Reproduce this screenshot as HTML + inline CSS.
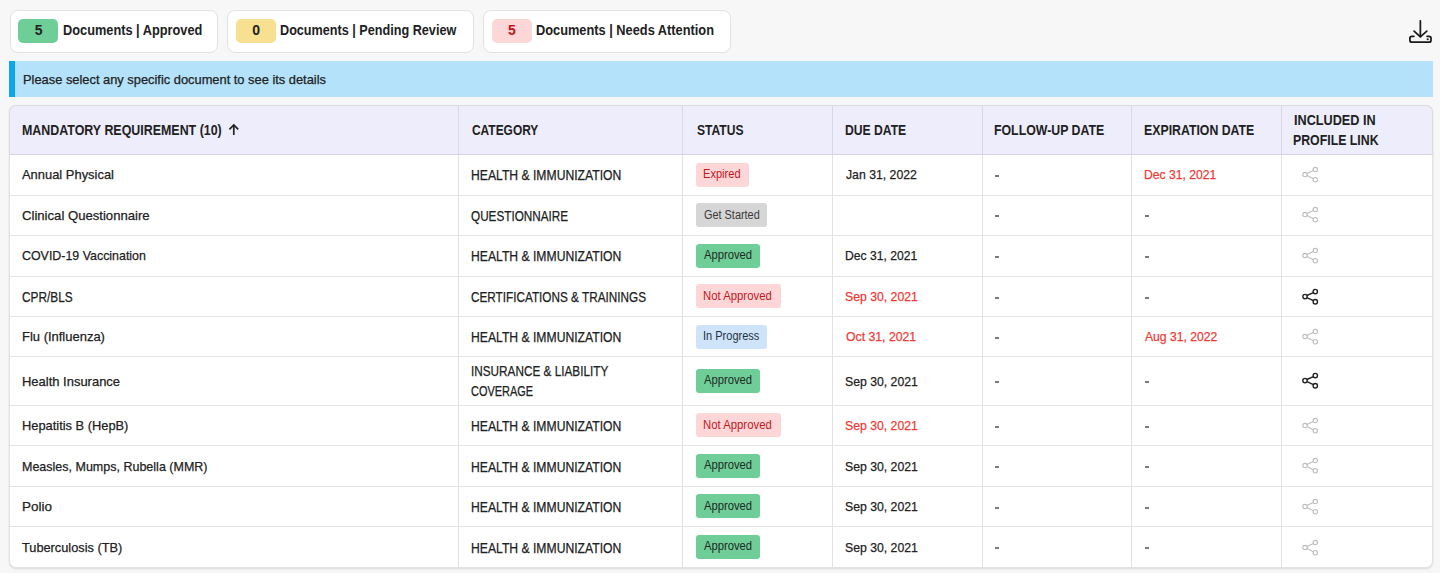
<!DOCTYPE html><html><head><meta charset="utf-8"><style>
*{margin:0;padding:0;box-sizing:border-box}
html,body{width:1440px;height:573px;overflow:hidden;background:#f7f7f7;font-family:"Liberation Sans",sans-serif}
.t{position:absolute;white-space:nowrap;line-height:20px;transform-origin:0 0}
.r{-webkit-text-stroke:0.25px currentColor}
.card{position:absolute;top:10px;height:43px;background:#fff;border:1px solid #e2e2e2;border-radius:8px}
.cb{position:absolute;top:19.4px;width:40.2px;height:24.1px;border-radius:5px}
.cbt{position:absolute;top:17.8px;width:40.2px;height:24.1px;line-height:24px;text-align:center;font-size:14px;font-weight:700}
.ic{position:absolute}
.info{position:absolute;left:9px;top:61px;width:1423.5px;height:35.5px;background:#b3e2fa;border-left:6px solid #0ea5ef}
.tbl{position:absolute;left:9.3px;top:104.6px;width:1423.7px;height:463.1px;background:#fff;border:1px solid #e2e2e2;border-radius:7px;box-shadow:0 1px 2px rgba(0,0,0,.12)}
.thead{position:absolute;left:9.3px;top:104.6px;width:1423.7px;height:50.3px;background:#eeedfc;border:1px solid #dcdcdf;border-bottom:1px solid #d6d3e6;border-radius:7px 7px 0 0}
.hl{position:absolute;left:10.3px;width:1421.7px;height:1px;background:#e4e4e4}
.vlh{position:absolute;top:105.6px;height:48.8px;width:1px;background:#d9d6ea}
.vl{position:absolute;top:155px;height:411.5px;width:1px;background:#e2e2e2}
.sb{position:absolute;height:24px;border-radius:3px}
.dash{position:absolute;width:4px;height:2px;background:#7a7a7a}
</style></head><body>
<div class="card" style="left:9.6px;width:208.7px"></div>
<div class="card" style="left:227.2px;width:246.5px"></div>
<div class="card" style="left:482.6px;width:248.2px"></div>
<div class="cb" style="left:18.3px;background:#6fce97"></div>
<div class="cb" style="left:236px;background:#f7e08f"></div>
<div class="cb" style="left:491.8px;background:#fdd6d8"></div>
<div class="cbt" style="left:18.5px;color:#212121">5</div>
<div class="cbt" style="left:236px;color:#212121">0</div>
<div class="cbt" style="left:491.8px;color:#c2161c">5</div>
<svg class="ic" style="left:1405px;top:15px" width="32" height="32" viewBox="0 0 32 32"><g fill="none" stroke="#1a1a1a" stroke-width="1.75" stroke-linecap="round" stroke-linejoin="round"><line x1="15.37" y1="5.8" x2="15.37" y2="21.4"/><polyline points="9.1,16.2 15.37,21.9 21.8,16.2"/><path d="M8.9 21.3 H6.9 A2 2 0 0 0 4.9 23.3 V25.2 A2 2 0 0 0 6.9 27.2 H24 A2 2 0 0 0 26 25.2 V23.3 A2 2 0 0 0 24 21.3 H22.0"/></g><circle cx="22.7" cy="24.2" r="1.05" fill="#1a1a1a"/></svg>
<div class="info"></div>
<div class="tbl"></div><div class="thead"></div>
<div class="hl" style="top:194.50px"></div>
<div class="hl" style="top:235.00px"></div>
<div class="hl" style="top:275.50px"></div>
<div class="hl" style="top:316.00px"></div>
<div class="hl" style="top:356.10px"></div>
<div class="hl" style="top:404.50px"></div>
<div class="hl" style="top:445.00px"></div>
<div class="hl" style="top:485.50px"></div>
<div class="hl" style="top:526.00px"></div>
<div class="vlh" style="left:458.10px"></div><div class="vl" style="left:458.10px"></div>
<div class="vlh" style="left:682.30px"></div><div class="vl" style="left:682.30px"></div>
<div class="vlh" style="left:832.00px"></div><div class="vl" style="left:832.00px"></div>
<div class="vlh" style="left:982.30px"></div><div class="vl" style="left:982.30px"></div>
<div class="vlh" style="left:1131.10px"></div><div class="vl" style="left:1131.10px"></div>
<div class="vlh" style="left:1280.75px"></div><div class="vl" style="left:1280.75px"></div>
<div class="sb" style="left:695.9px;top:162.75px;width:53.3px;background:#fdd6d8"></div>
<div class="sb" style="left:695.9px;top:203.25px;width:71.3px;background:#d6d6d6"></div>
<div class="sb" style="left:695.9px;top:243.75px;width:64px;background:#6fce97"></div>
<div class="sb" style="left:695.9px;top:284.25px;width:84.75px;background:#fdd6d8"></div>
<div class="sb" style="left:695.9px;top:324.55px;width:71px;background:#cfe4fb"></div>
<div class="sb" style="left:695.9px;top:368.80px;width:64px;background:#6fce97"></div>
<div class="sb" style="left:695.9px;top:413.25px;width:84.75px;background:#fdd6d8"></div>
<div class="sb" style="left:695.9px;top:453.75px;width:64px;background:#6fce97"></div>
<div class="sb" style="left:695.9px;top:494.25px;width:64px;background:#6fce97"></div>
<div class="sb" style="left:695.9px;top:534.75px;width:64px;background:#6fce97"></div>
<div class="dash" style="left:995.0px;top:175px"></div>
<div class="dash" style="left:995.0px;top:215px"></div>
<div class="dash" style="left:1145.0px;top:215px"></div>
<div class="dash" style="left:995.0px;top:256px"></div>
<div class="dash" style="left:1145.0px;top:256px"></div>
<div class="dash" style="left:995.0px;top:297px"></div>
<div class="dash" style="left:1145.0px;top:297px"></div>
<div class="dash" style="left:995.0px;top:337px"></div>
<div class="dash" style="left:995.0px;top:381px"></div>
<div class="dash" style="left:1145.0px;top:381px"></div>
<div class="dash" style="left:995.0px;top:426px"></div>
<div class="dash" style="left:1145.0px;top:426px"></div>
<div class="dash" style="left:995.0px;top:466px"></div>
<div class="dash" style="left:1145.0px;top:466px"></div>
<div class="dash" style="left:995.0px;top:507px"></div>
<div class="dash" style="left:1145.0px;top:507px"></div>
<div class="dash" style="left:995.0px;top:547px"></div>
<div class="dash" style="left:1145.0px;top:547px"></div>
<svg class="ic" style="left:1300px;top:164.75px" width="20" height="20" viewBox="0 0 20 20"><g fill="none" stroke="#bdbdbd" stroke-width="1.1"><circle cx="5" cy="9.55" r="2.2"/><circle cx="15.3" cy="4.55" r="2.2"/><circle cx="15.3" cy="14.75" r="2.2"/><line x1="6.9" y1="8.5" x2="13.4" y2="5.6"/><line x1="6.9" y1="10.6" x2="13.4" y2="13.7"/></g></svg>
<svg class="ic" style="left:1300px;top:205.35px" width="20" height="20" viewBox="0 0 20 20"><g fill="none" stroke="#bdbdbd" stroke-width="1.1"><circle cx="5" cy="9.55" r="2.2"/><circle cx="15.3" cy="4.55" r="2.2"/><circle cx="15.3" cy="14.75" r="2.2"/><line x1="6.9" y1="8.5" x2="13.4" y2="5.6"/><line x1="6.9" y1="10.6" x2="13.4" y2="13.7"/></g></svg>
<svg class="ic" style="left:1300px;top:245.95px" width="20" height="20" viewBox="0 0 20 20"><g fill="none" stroke="#bdbdbd" stroke-width="1.1"><circle cx="5" cy="9.55" r="2.2"/><circle cx="15.3" cy="4.55" r="2.2"/><circle cx="15.3" cy="14.75" r="2.2"/><line x1="6.9" y1="8.5" x2="13.4" y2="5.6"/><line x1="6.9" y1="10.6" x2="13.4" y2="13.7"/></g></svg>
<svg class="ic" style="left:1300px;top:286.55px" width="20" height="20" viewBox="0 0 20 20"><g fill="none" stroke="#222222" stroke-width="1.4"><circle cx="5" cy="9.55" r="2.2"/><circle cx="15.3" cy="4.55" r="2.2"/><circle cx="15.3" cy="14.75" r="2.2"/><line x1="6.9" y1="8.5" x2="13.4" y2="5.6"/><line x1="6.9" y1="10.6" x2="13.4" y2="13.7"/></g></svg>
<svg class="ic" style="left:1300px;top:326.95px" width="20" height="20" viewBox="0 0 20 20"><g fill="none" stroke="#bdbdbd" stroke-width="1.1"><circle cx="5" cy="9.55" r="2.2"/><circle cx="15.3" cy="4.55" r="2.2"/><circle cx="15.3" cy="14.75" r="2.2"/><line x1="6.9" y1="8.5" x2="13.4" y2="5.6"/><line x1="6.9" y1="10.6" x2="13.4" y2="13.7"/></g></svg>
<svg class="ic" style="left:1300px;top:371.30px" width="20" height="20" viewBox="0 0 20 20"><g fill="none" stroke="#222222" stroke-width="1.4"><circle cx="5" cy="9.55" r="2.2"/><circle cx="15.3" cy="4.55" r="2.2"/><circle cx="15.3" cy="14.75" r="2.2"/><line x1="6.9" y1="8.5" x2="13.4" y2="5.6"/><line x1="6.9" y1="10.6" x2="13.4" y2="13.7"/></g></svg>
<svg class="ic" style="left:1300px;top:415.85px" width="20" height="20" viewBox="0 0 20 20"><g fill="none" stroke="#bdbdbd" stroke-width="1.1"><circle cx="5" cy="9.55" r="2.2"/><circle cx="15.3" cy="4.55" r="2.2"/><circle cx="15.3" cy="14.75" r="2.2"/><line x1="6.9" y1="8.5" x2="13.4" y2="5.6"/><line x1="6.9" y1="10.6" x2="13.4" y2="13.7"/></g></svg>
<svg class="ic" style="left:1300px;top:456.45px" width="20" height="20" viewBox="0 0 20 20"><g fill="none" stroke="#bdbdbd" stroke-width="1.1"><circle cx="5" cy="9.55" r="2.2"/><circle cx="15.3" cy="4.55" r="2.2"/><circle cx="15.3" cy="14.75" r="2.2"/><line x1="6.9" y1="8.5" x2="13.4" y2="5.6"/><line x1="6.9" y1="10.6" x2="13.4" y2="13.7"/></g></svg>
<svg class="ic" style="left:1300px;top:497.05px" width="20" height="20" viewBox="0 0 20 20"><g fill="none" stroke="#bdbdbd" stroke-width="1.1"><circle cx="5" cy="9.55" r="2.2"/><circle cx="15.3" cy="4.55" r="2.2"/><circle cx="15.3" cy="14.75" r="2.2"/><line x1="6.9" y1="8.5" x2="13.4" y2="5.6"/><line x1="6.9" y1="10.6" x2="13.4" y2="13.7"/></g></svg>
<svg class="ic" style="left:1300px;top:537.65px" width="20" height="20" viewBox="0 0 20 20"><g fill="none" stroke="#bdbdbd" stroke-width="1.1"><circle cx="5" cy="9.55" r="2.2"/><circle cx="15.3" cy="4.55" r="2.2"/><circle cx="15.3" cy="14.75" r="2.2"/><line x1="6.9" y1="8.5" x2="13.4" y2="5.6"/><line x1="6.9" y1="10.6" x2="13.4" y2="13.7"/></g></svg>
<svg class="ic" style="left:226px;top:122px" width="16" height="16" viewBox="0 0 16 16"><g fill="none" stroke="#222" stroke-width="1.7" stroke-linecap="butt" stroke-linejoin="miter"><line x1="7.8" y1="3.2" x2="7.8" y2="13"/><polyline points="3.4,7.4 7.8,3 12.2,7.4"/></g></svg>
<div class="t" id="t0" style="left:62.59px;top:19.75px;font-size:14px;font-weight:700;color:#212121;transform:scaleX(0.9123)">Documents | Approved</div>
<div class="t" id="t1" style="left:279.59px;top:19.75px;font-size:14px;font-weight:700;color:#212121;transform:scaleX(0.9026)">Documents | Pending Review</div>
<div class="t" id="t2" style="left:535.58px;top:19.75px;font-size:14px;font-weight:700;color:#212121;transform:scaleX(0.9139)">Documents | Needs Attention</div>
<div class="t r" id="t3" style="left:23.41px;top:69.50px;font-size:13px;font-weight:400;color:#212121;transform:scaleX(0.9889)">Please select any specific document to see its details</div>
<div class="t" id="t4" style="left:22.00px;top:119.90px;font-size:14px;font-weight:700;color:#212121;transform:scaleX(0.8876)">MANDATORY REQUIREMENT (10)</div>
<div class="t" id="t5" style="left:471.77px;top:119.90px;font-size:14px;font-weight:700;color:#212121;transform:scaleX(0.8528)">CATEGORY</div>
<div class="t" id="t6" style="left:696.52px;top:119.90px;font-size:14px;font-weight:700;color:#212121;transform:scaleX(0.8622)">STATUS</div>
<div class="t" id="t7" style="left:844.82px;top:119.90px;font-size:14px;font-weight:700;color:#212121;transform:scaleX(0.8678)">DUE DATE</div>
<div class="t" id="t8" style="left:994.40px;top:119.90px;font-size:14px;font-weight:700;color:#212121;transform:scaleX(0.8806)">FOLLOW-UP DATE</div>
<div class="t" id="t9" style="left:1144.01px;top:119.90px;font-size:14px;font-weight:700;color:#212121;transform:scaleX(0.8791)">EXPIRATION DATE</div>
<div class="t" id="t10" style="left:1293.51px;top:110.15px;font-size:14px;font-weight:700;color:#212121;transform:scaleX(0.9051)">INCLUDED IN</div>
<div class="t" id="t11" style="left:1293.49px;top:129.90px;font-size:14px;font-weight:700;color:#212121;transform:scaleX(0.8802)">PROFILE LINK</div>
<div class="t r" id="t12" style="left:22.30px;top:165.34px;font-size:13.6px;font-weight:400;color:#212121;transform:scaleX(0.9506)">Annual Physical</div>
<div class="t r" id="t13" style="left:470.90px;top:165.13px;font-size:14.2px;font-weight:400;color:#212121;transform:scaleX(0.8576)">HEALTH &amp; IMMUNIZATION</div>
<div class="t" id="t14" style="left:702.78px;top:164.19px;font-size:12px;font-weight:400;color:#c2161c;transform:scaleX(0.9226)">Expired</div>
<div class="t r" id="t15" style="left:845.59px;top:165.34px;font-size:13.6px;font-weight:400;color:#212121;transform:scaleX(0.9010)">Jan 31, 2022</div>
<div class="t r" id="t16" style="left:1143.73px;top:165.34px;font-size:13.6px;font-weight:400;color:#ee3a36;transform:scaleX(0.8924)">Dec 31, 2021</div>
<div class="t r" id="t17" style="left:22.30px;top:205.90px;font-size:13.6px;font-weight:400;color:#212121;transform:scaleX(0.9654)">Clinical Questionnaire</div>
<div class="t r" id="t18" style="left:470.90px;top:205.69px;font-size:14.2px;font-weight:400;color:#212121;transform:scaleX(0.8269)">QUESTIONNAIRE</div>
<div class="t" id="t19" style="left:703.82px;top:204.69px;font-size:12px;font-weight:400;color:#3a3a3a;transform:scaleX(0.9081)">Get Started</div>
<div class="t r" id="t20" style="left:22.30px;top:246.46px;font-size:13.6px;font-weight:400;color:#212121;transform:scaleX(0.9128)">COVID-19 Vaccination</div>
<div class="t r" id="t21" style="left:470.90px;top:246.25px;font-size:14.2px;font-weight:400;color:#212121;transform:scaleX(0.8576)">HEALTH &amp; IMMUNIZATION</div>
<div class="t" id="t22" style="left:703.86px;top:245.19px;font-size:12px;font-weight:400;color:#1e2a24;transform:scaleX(0.9351)">Approved</div>
<div class="t r" id="t23" style="left:844.56px;top:246.46px;font-size:13.6px;font-weight:400;color:#212121;transform:scaleX(0.8924)">Dec 31, 2021</div>
<div class="t r" id="t24" style="left:22.30px;top:286.81px;font-size:14.2px;font-weight:400;color:#212121;transform:scaleX(0.8340)">CPR/BLS</div>
<div class="t r" id="t25" style="left:470.90px;top:286.81px;font-size:14.2px;font-weight:400;color:#212121;transform:scaleX(0.8282)">CERTIFICATIONS &amp; TRAININGS</div>
<div class="t" id="t26" style="left:702.82px;top:285.69px;font-size:12px;font-weight:400;color:#c2161c;transform:scaleX(0.9454)">Not Approved</div>
<div class="t r" id="t27" style="left:844.55px;top:287.02px;font-size:13.6px;font-weight:400;color:#ee3a36;transform:scaleX(0.9010)">Sep 30, 2021</div>
<div class="t r" id="t28" style="left:22.30px;top:327.38px;font-size:13.6px;font-weight:400;color:#212121;transform:scaleX(0.9543)">Flu (Influenza)</div>
<div class="t r" id="t29" style="left:470.90px;top:327.17px;font-size:14.2px;font-weight:400;color:#212121;transform:scaleX(0.8576)">HEALTH &amp; IMMUNIZATION</div>
<div class="t" id="t30" style="left:702.78px;top:325.99px;font-size:12px;font-weight:400;color:#26313d;transform:scaleX(0.9181)">In Progress</div>
<div class="t r" id="t31" style="left:845.60px;top:327.38px;font-size:13.6px;font-weight:400;color:#ee3a36;transform:scaleX(0.9017)">Oct 31, 2021</div>
<div class="t r" id="t32" style="left:1144.78px;top:327.38px;font-size:13.6px;font-weight:400;color:#ee3a36;transform:scaleX(0.8931)">Aug 31, 2022</div>
<div class="t r" id="t33" style="left:22.30px;top:371.69px;font-size:13.6px;font-weight:400;color:#212121;transform:scaleX(0.9543)">Health Insurance</div>
<div class="t r" id="t34" style="left:470.90px;top:361.28px;font-size:14.2px;font-weight:400;color:#212121;transform:scaleX(0.8294)">INSURANCE &amp; LIABILITY</div>
<div class="t r" id="t35" style="left:470.90px;top:380.68px;font-size:14.2px;font-weight:400;color:#212121;transform:scaleX(0.7720)">COVERAGE</div>
<div class="t" id="t36" style="left:703.86px;top:370.24px;font-size:12px;font-weight:400;color:#1e2a24;transform:scaleX(0.9351)">Approved</div>
<div class="t r" id="t37" style="left:844.55px;top:371.69px;font-size:13.6px;font-weight:400;color:#212121;transform:scaleX(0.9010)">Sep 30, 2021</div>
<div class="t r" id="t38" style="left:22.30px;top:416.20px;font-size:13.6px;font-weight:400;color:#212121;transform:scaleX(0.9449)">Hepatitis B (HepB)</div>
<div class="t r" id="t39" style="left:470.90px;top:415.99px;font-size:14.2px;font-weight:400;color:#212121;transform:scaleX(0.8576)">HEALTH &amp; IMMUNIZATION</div>
<div class="t" id="t40" style="left:702.82px;top:414.69px;font-size:12px;font-weight:400;color:#c2161c;transform:scaleX(0.9454)">Not Approved</div>
<div class="t r" id="t41" style="left:844.55px;top:416.20px;font-size:13.6px;font-weight:400;color:#ee3a36;transform:scaleX(0.9010)">Sep 30, 2021</div>
<div class="t r" id="t42" style="left:22.30px;top:456.76px;font-size:13.6px;font-weight:400;color:#212121;transform:scaleX(0.9197)">Measles, Mumps, Rubella (MMR)</div>
<div class="t r" id="t43" style="left:470.90px;top:456.55px;font-size:14.2px;font-weight:400;color:#212121;transform:scaleX(0.8576)">HEALTH &amp; IMMUNIZATION</div>
<div class="t" id="t44" style="left:703.86px;top:455.19px;font-size:12px;font-weight:400;color:#1e2a24;transform:scaleX(0.9351)">Approved</div>
<div class="t r" id="t45" style="left:844.55px;top:456.76px;font-size:13.6px;font-weight:400;color:#212121;transform:scaleX(0.9010)">Sep 30, 2021</div>
<div class="t r" id="t46" style="left:22.30px;top:497.32px;font-size:13.6px;font-weight:400;color:#212121;transform:scaleX(0.9925)">Polio</div>
<div class="t r" id="t47" style="left:470.90px;top:497.11px;font-size:14.2px;font-weight:400;color:#212121;transform:scaleX(0.8576)">HEALTH &amp; IMMUNIZATION</div>
<div class="t" id="t48" style="left:703.86px;top:495.69px;font-size:12px;font-weight:400;color:#1e2a24;transform:scaleX(0.9351)">Approved</div>
<div class="t r" id="t49" style="left:844.55px;top:497.32px;font-size:13.6px;font-weight:400;color:#212121;transform:scaleX(0.9010)">Sep 30, 2021</div>
<div class="t r" id="t50" style="left:22.30px;top:537.88px;font-size:13.6px;font-weight:400;color:#212121;transform:scaleX(0.9391)">Tuberculosis (TB)</div>
<div class="t r" id="t51" style="left:470.90px;top:537.67px;font-size:14.2px;font-weight:400;color:#212121;transform:scaleX(0.8576)">HEALTH &amp; IMMUNIZATION</div>
<div class="t" id="t52" style="left:703.86px;top:536.19px;font-size:12px;font-weight:400;color:#1e2a24;transform:scaleX(0.9351)">Approved</div>
<div class="t r" id="t53" style="left:844.55px;top:537.88px;font-size:13.6px;font-weight:400;color:#212121;transform:scaleX(0.9010)">Sep 30, 2021</div>
</body></html>
